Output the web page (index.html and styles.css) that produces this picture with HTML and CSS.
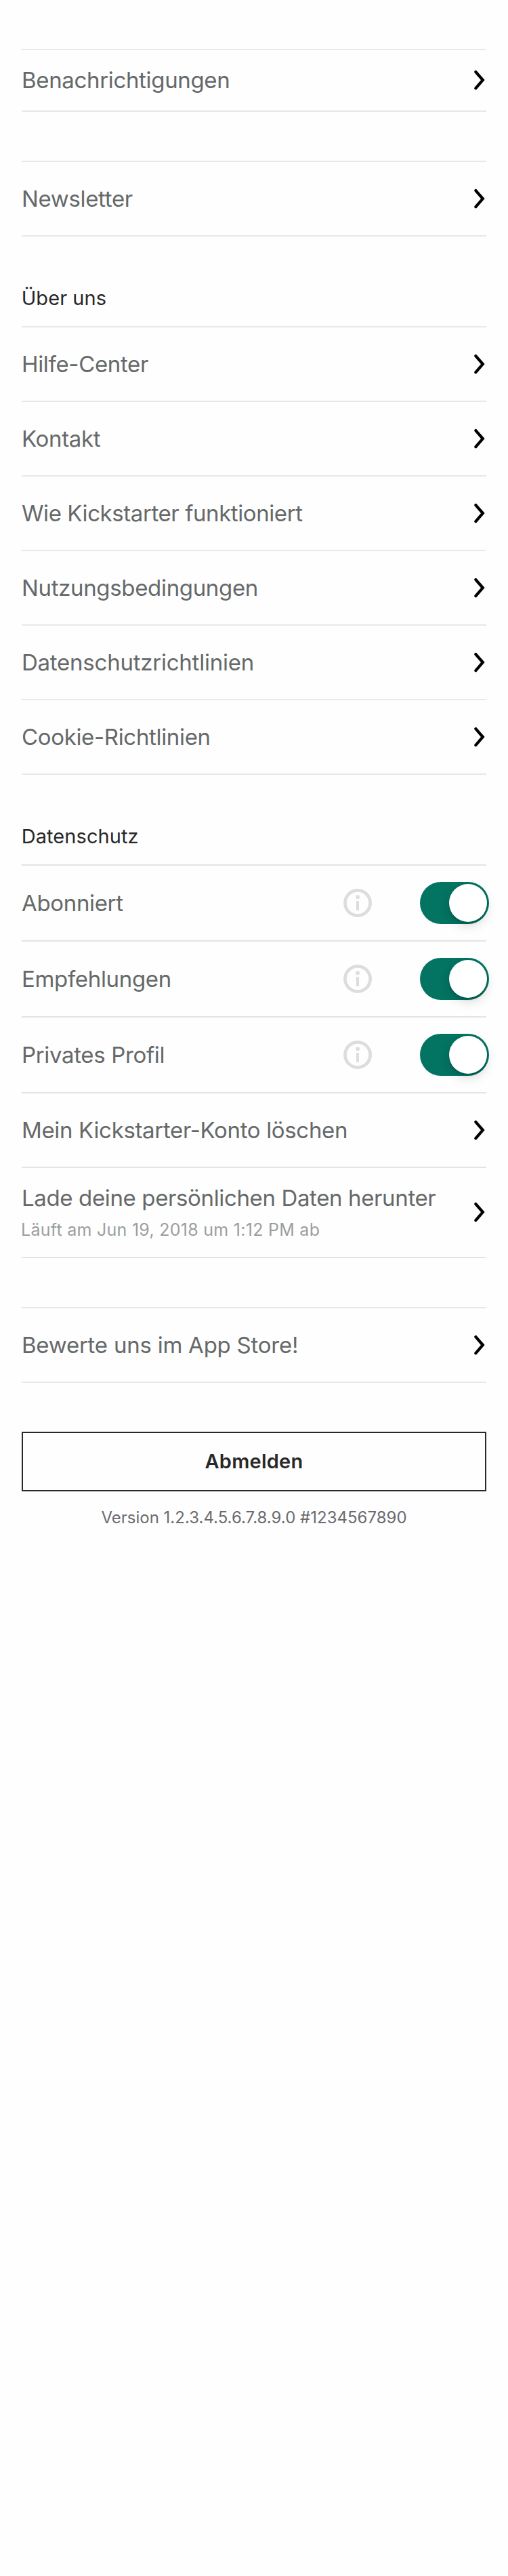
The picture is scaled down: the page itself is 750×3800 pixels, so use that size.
FILE: index.html
```html
<!DOCTYPE html>
<html lang="de">
<head>
<meta charset="utf-8">
<title>Einstellungen</title>
<link rel="stylesheet" href="styles.css">
</head>
<body>
<svg class="symbols" aria-hidden="true">
  <symbol id="chevron" viewBox="0 0 18 30"><path d="M2.4 3.1 L12.8 15.1 L2.4 27.1" fill="none" stroke="#000" stroke-width="4.3" stroke-linecap="round"/></symbol>
  <symbol id="info" viewBox="0 0 42 42"><circle cx="21" cy="21" r="18.6" fill="none" stroke="#dcdede" stroke-width="4.8"/><circle cx="21" cy="12.2" r="3" fill="#dcdede"/><rect x="19" y="18" width="4" height="14" fill="#dcdede"/></symbol>
</svg>
<main class="settings">
  <section class="group">
    <a class="row row-short"><span class="label">Benachrichtigungen</span><svg class="chevron"><use href="#chevron"/></svg></a>
  </section>
  <section class="group">
    <a class="row"><span class="label">Newsletter</span><svg class="chevron"><use href="#chevron"/></svg></a>
  </section>
  <section class="group titled">
    <h2 class="heading">Über uns</h2>
    <a class="row first"><span class="label">Hilfe-Center</span><svg class="chevron"><use href="#chevron"/></svg></a>
    <a class="row"><span class="label">Kontakt</span><svg class="chevron"><use href="#chevron"/></svg></a>
    <a class="row"><span class="label wide-text">Wie Kickstarter funktioniert</span><svg class="chevron"><use href="#chevron"/></svg></a>
    <a class="row"><span class="label">Nutzungsbedingungen</span><svg class="chevron"><use href="#chevron"/></svg></a>
    <a class="row"><span class="label loose-text">Datenschutzrichtlinien</span><svg class="chevron"><use href="#chevron"/></svg></a>
    <a class="row"><span class="label">Cookie-Richtlinien</span><svg class="chevron"><use href="#chevron"/></svg></a>
  </section>
  <section class="group titled privacy">
    <h2 class="heading">Datenschutz</h2>
    <div class="row row-switch first"><span class="label">Abonniert</span><svg class="info"><use href="#info"/></svg><span class="switch"><span class="knob"></span></span></div>
    <div class="row row-switch"><span class="label">Empfehlungen</span><svg class="info"><use href="#info"/></svg><span class="switch"><span class="knob"></span></span></div>
    <div class="row row-switch"><span class="label">Privates Profil</span><svg class="info"><use href="#info"/></svg><span class="switch"><span class="knob"></span></span></div>
    <a class="row"><span class="label">Mein Kickstarter-Konto löschen</span><svg class="chevron"><use href="#chevron"/></svg></a>
    <a class="row row-detail"><span class="texts"><span class="label">Lade deine persönlichen Daten herunter</span><span class="detail">Läuft am Jun 19, 2018 um 1:12 PM ab</span></span><svg class="chevron"><use href="#chevron"/></svg></a>
  </section>
  <section class="group">
    <a class="row"><span class="label loose-text">Bewerte uns im App Store!</span><svg class="chevron"><use href="#chevron"/></svg></a>
  </section>
  <button class="logout">Abmelden</button>
  <p class="version">Version 1.2.3.4.5.6.7.8.9.0 #1234567890</p>
</main>
</body>
</html>
```

FILE: styles.css
```css
* { box-sizing: border-box; }

body {
  margin: 0;
  min-height: 3800px;
  background: #fefefe;
  color: #282828;
  font-family: Inter, "Liberation Sans", sans-serif;
}

.symbols { display: none; }

.settings {
  display: flex;
  flex-direction: column;
  padding: 72px 32px 0;
}

.group {
  --line: #e8e8e8;
  margin-bottom: 72px;
  border-top: 2px solid var(--line);
}

.group.titled {
  margin-top: -72px;
  border-top: 0;
}

.privacy { --line: #e4e4e4; }

.heading {
  height: 132px;
  margin: 0;
  padding-top: 70px;
  font-size: 29px;
  font-weight: 400;
  line-height: 41px;
  letter-spacing: 0.07px;
  text-indent: -0.3px;
}

.row {
  display: flex;
  align-items: center;
  height: 110px;
  border-bottom: 2px solid var(--line);
}

.row.first {
  height: 112px;
  border-top: 2px solid var(--line);
}

.row-short { height: 91px; }
.row-short .label { margin-bottom: 1px; }
.row-switch { height: 112px; }
.row-switch.first { height: 114px; }
.row-detail { height: 133px; }

.label {
  flex: 1;
  color: #656969;
  font-size: 33px;
  line-height: 40px;
  letter-spacing: -0.34px;
  white-space: nowrap;
}

.wide-text { letter-spacing: -0.42px; }
.loose-text { letter-spacing: -0.24px; }

.texts {
  display: flex;
  flex: 1;
  flex-direction: column;
  gap: 10px;
  height: 100%;
  padding-top: 24px;
}

.texts .label { flex: none; letter-spacing: -0.37px; }

.detail {
  color: #9b9e9e;
  font-size: 25px;
  line-height: 34px;
  letter-spacing: 0.27px;
  text-indent: -1px;
}

.chevron {
  width: 18px;
  height: 30px;
  margin-bottom: 1px;
}

.info {
  width: 42px;
  height: 42px;
  margin-right: 71px;
}

.switch {
  display: flex;
  justify-content: flex-end;
  width: 102px;
  height: 62px;
  margin-right: -4px;
  padding: 3px;
  border-radius: 31px;
  background: #037362;
}

.knob {
  width: 56px;
  height: 56px;
  border-radius: 50%;
  background: #fff;
  box-shadow: 0 6px 16px rgba(0, 0, 0, 0.14), 0 3px 3px rgba(0, 0, 0, 0.12);
}

.logout {
  height: 88px;
  padding: 0;
  border: 2px solid #282828;
  background: #fefefe;
  color: #282828;
  font: 600 29px/44px Inter, "Liberation Sans", sans-serif;
  letter-spacing: 0.24px;
}

.version {
  margin: 24px 0 0;
  color: #6b6b70;
  font-size: 24px;
  line-height: 30px;
  text-align: center;
}
```
